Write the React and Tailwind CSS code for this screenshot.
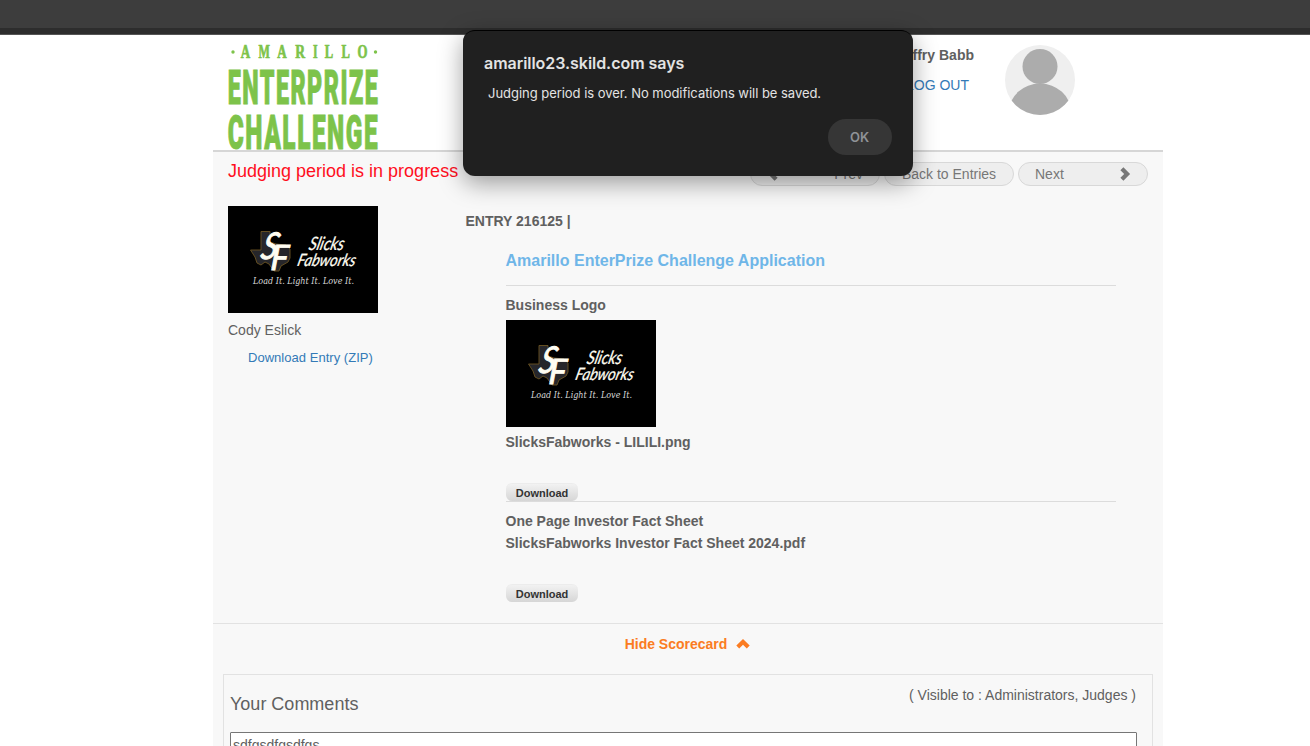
import React from "react";

const amarilloLetters = [
  ["A", 12.8, 9.4],
  ["M", 30.4, 11.4],
  ["A", 49.3, 9.4],
  ["R", 67.2, 9.8],
  ["I", 85, 4.6],
  ["L", 96.8, 8.4],
  ["L", 113.5, 8.4],
  ["O", 129.4, 10],
];

function ChallengeLogo() {
  return (
    <svg className="block h-[117px] w-[152px] overflow-visible" viewBox="0 -10 152 117" fill="#7dc34a">
      <circle cx="5" cy="9" r="1.7" />
      <circle cx="147.500" cy="9" r="1.7" />
      <g stroke="#7dc34a" strokeWidth="0.7" fontFamily="'Liberation Serif', serif" fontWeight="700" fontSize="19">
        {amarilloLetters.map(([letter, x, w]) => (
          <text key={x} x={x} y="15.200" textLength={w} lengthAdjust="spacingAndGlyphs">
            {letter}
          </text>
        ))}
      </g>
      <g stroke="#7dc34a" strokeWidth="1" fontFamily="Roboto, sans-serif" fontWeight="900" fontSize="48" letterSpacing="3">
        <text x="-0.3" y="60.500" textLength="151.500" lengthAdjust="spacingAndGlyphs">
          ENTERPRIZE
        </text>
        <text x="-0.3" y="105.700" textLength="151.500" lengthAdjust="spacingAndGlyphs">
          CHALLENGE
        </text>
      </g>
    </svg>
  );
}

function BusinessLogo() {
  return (
    <svg className="block h-[107px] w-[150px] bg-black" viewBox="0 0 150 107">
      <path
        d="M33 25.500H42V36L48 38L58 39L62 43L62 52L60 56L53 60L51 65H46L41 58L37 56L33 59L29 57L27 51L22.500 44H33Z"
        fill="#26262a"
        stroke="#6b5321"
        strokeWidth="0.9"
      />
      <g fill="#fffdf2" stroke="#fffdf2" fontFamily="Lato, sans-serif" fontStyle="italic" fontWeight="400">
        <text transform="translate(31.500 52.500) skewX(-14)" fontSize="37" strokeWidth="0.9" textLength="16" lengthAdjust="spacingAndGlyphs">S</text>
        <text transform="translate(42 63.500) skewX(-4)" fontSize="35" strokeWidth="0.9" textLength="18" lengthAdjust="spacingAndGlyphs">F</text>
        <text transform="translate(80 44) skewX(-14)" fontSize="18.500" strokeWidth="0.25" textLength="35" lengthAdjust="spacingAndGlyphs">Slicks</text>
        <text transform="translate(68.500 59.500) skewX(-14)" fontSize="17" strokeWidth="0.25" textLength="58" lengthAdjust="spacingAndGlyphs">Fabworks</text>
      </g>
      <text x="25" y="78" fill="#d8d8d8" fontFamily="'DejaVu Serif', serif" fontStyle="italic" fontWeight="400" fontSize="9" textLength="101" lengthAdjust="spacingAndGlyphs">
        Load It. Light It. Love It.
      </text>
    </svg>
  );
}

function Avatar() {
  return (
    <svg className="h-[70px] w-[70px] rounded-full bg-[#efefef]" viewBox="0 0 70 70" fill="#acacac">
      <circle cx="35" cy="21.500" r="17.500" />
      <ellipse cx="35" cy="67" rx="31" ry="28.500" />
    </svg>
  );
}

function Chevron({ className }) {
  return (
    <svg className={className} viewBox="0 0 14 14" fill="currentColor">
      <path d="M2.400 3.200L5.400 0.300L12.100 7L5.400 13.700L2.400 10.800L6.200 7Z" />
    </svg>
  );
}

function DownloadButton({ className = "" }) {
  return (
    <button
      className={`block h-[18px] w-[72px] rounded-md border-t border-[#ececec] bg-linear-to-b from-[#f2f2f2] to-[#d6d6d6] text-[11px] leading-[17px] font-bold text-[#333] ${className}`}
    >
      Download
    </button>
  );
}

const navButton = "flex h-6 w-[130px] items-center rounded-full border border-[#d8d8d8] bg-[#eeeeee] px-4 text-[14px] text-[#777]";

export default function App() {
  return (
    <div className="relative h-[746px] w-[1310px] overflow-hidden bg-white font-['Liberation_Sans',Arial,sans-serif] text-[14px] text-[#606060]">
      <div className="h-[35px] border-b border-[#555] bg-[#2d2d2d]">
        <div className="h-7 bg-[#3d3d3d]" />
      </div>

      <div className="ml-[213px] w-[950px]">
        <header className="flex h-[117px] justify-between border-b-2 border-[#d6d6d6] pl-[15px] pr-[88px]">
          <div className="-mt-[2px]">
            <ChallengeLogo />
          </div>
          <div className="flex gap-[31px] pt-[10px]">
            <div className="leading-5">
              <p className="font-bold">Jeffry Babb</p>
              <a className="mt-[10px] block pr-[5px] text-right text-[#337ab7]">LOG OUT</a>
            </div>
            <Avatar />
          </div>
        </header>

        <main className="h-[594px] bg-[#f8f8f8]">
          <section className="h-[472px] border-b border-[#e2e2e2]">
            <div className="flex h-[54px] justify-between pl-[15px] pr-[15px] pt-[10px]">
              <p className="-mt-[2px] text-[18px] leading-[22px] text-[#ff0f1e]">Judging period is in progress</p>
              <nav className="flex gap-1">
                <button className={`${navButton} justify-between`}>
                  <Chevron className="-ml-px h-[14px] w-[14px] rotate-180" />
                  Prev
                </button>
                <button className={`${navButton} justify-center`}>Back to Entries</button>
                <button className={`${navButton} justify-between`}>
                  Next
                  <Chevron className="-mr-px h-[14px] w-[14px]" />
                </button>
              </nav>
            </div>
            <div className="flex">
              <aside className="w-[252px] pl-[15px]">
                <BusinessLogo />
                <p className="mt-[7px] leading-5">Cody Eslick</p>
                <a className="ml-5 mt-2 block text-[13px] leading-5 tracking-[0.03px] text-[#337ab7]">Download Entry (ZIP)</a>
              </aside>
              <article className="w-[651px] pt-[5px] font-bold leading-5">
                <h2 className="pl-[0.5px]">ENTRY 216125 |</h2>
                <div className="pl-[41px]">
                  <h3 className="mt-5 h-[35px] border-b border-[#dcdcdc] text-[16px] leading-5 text-[#6fb6e8]">
                    <span className="-ml-[0.5px]">Amarillo EnterPrize Challenge Application</span>
                  </h3>
                  <div className="h-[216px] border-b border-[#dcdcdc] pt-[9px]">
                    <p className="-ml-[0.5px] mb-[5px]">Business Logo</p>
                    <BusinessLogo />
                    <p className="-ml-[0.5px] mb-[31px] mt-[5px]">SlicksFabworks - LILILI.png</p>
                    <DownloadButton className="pt-px" />
                  </div>
                  <div className="pt-[9px]">
                    <p className="-ml-[0.5px]">One Page Investor Fact Sheet</p>
                    <p className="-ml-[0.5px] mb-[31px] mt-[2px]">SlicksFabworks Investor Fact Sheet 2024.pdf</p>
                    <DownloadButton className="pt-px" />
                  </div>
                </div>
              </article>
            </div>
          </section>

          <section className="px-[10px]">
            <button className="mx-auto flex h-[50px] items-start gap-[9px] pr-px pt-[10px] font-bold leading-5 text-[#fb7c22]">
              Hide Scorecard
              <Chevron className="mt-[3px] h-[14px] w-[14px] -rotate-90" />
            </button>
            <div className="h-[100px] border border-[#e2e2e2] px-[6px]">
              <div className="flex h-[57px] justify-between pr-[10px]">
                <h4 className="pt-[18px] text-[18px] leading-[22px]">Your Comments</h4>
                <p className="pt-[10px] leading-5">( Visible to : Administrators, Judges )</p>
              </div>
              <div className="mr-[9px] h-[60px] rounded-[1px] border border-[#767676] bg-white px-[2px] pt-[3px] text-[14px] leading-[18px]">
                sdfgsdfgsdfgs
              </div>
            </div>
          </section>
        </main>
      </div>

      <div
        role="alertdialog"
        className="absolute left-[463px] top-[30px] flex h-[146px] w-[450px] flex-col rounded-xl border-t border-black bg-[#202020] px-[21px] pt-[21px] font-[Inter,sans-serif] text-[#e3e3e3] shadow-[0_7px_24px_rgba(0,0,0,0.38)]"
      >
        <h1 className="text-[16px] font-semibold leading-[22px] tracking-[-0.04px]">amarillo23.skild.com says</h1>
        <p className="ml-[4px] mt-[9px] text-[13px] leading-5 tracking-[-0.035px]">Judging period is over. No modifications will be saved.</p>
        <button className="mt-4 h-9 w-16 self-end rounded-full bg-[#363636] pr-px pt-px text-[13px] font-semibold text-[#8f9297]">OK</button>
      </div>
    </div>
  );
}
